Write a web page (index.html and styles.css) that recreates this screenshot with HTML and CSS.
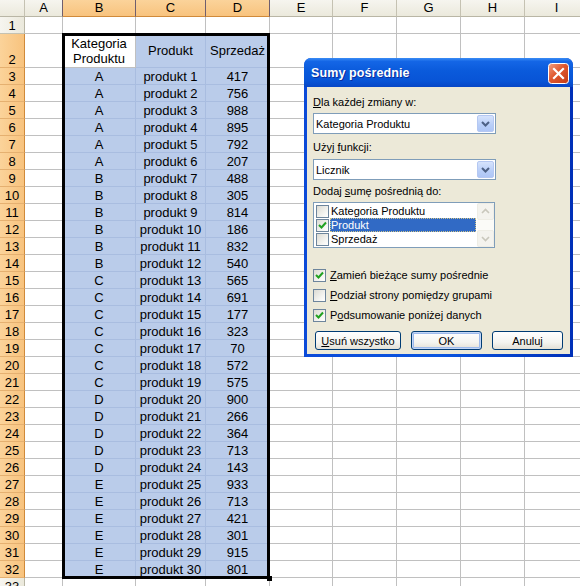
FILE: index.html
```html
<!DOCTYPE html>
<html lang="pl">
<head>
<meta charset="utf-8">
<title>Sumy pośrednie</title>
<link rel="stylesheet" href="styles.css">
</head>
<body>
<div class="sheet">
<div class="ch"></div><div class="ch">A</div><div class="ch cs">B</div><div class="ch cs">C</div><div class="ch cs">D</div><div class="ch">E</div><div class="ch">F</div><div class="ch">G</div><div class="ch">H</div><div class="ch">I</div>
<div class="rh">1</div><div class="c"></div><div class="c"></div><div class="c"></div><div class="c"></div><div class="c"></div><div class="c"></div><div class="c"></div><div class="c"></div><div class="c"></div>
<div class="rh rs">2</div><div class="c"></div><div class="c act mid">Kategoria<br>Produktu</div><div class="c s mid">Produkt</div><div class="c s mid">Sprzedaż</div><div class="c"></div><div class="c"></div><div class="c"></div><div class="c"></div><div class="c"></div>
<div class="rh rs">3</div><div class="c"></div><div class="c s">A</div><div class="c s">produkt 1</div><div class="c s">417</div><div class="c"></div><div class="c"></div><div class="c"></div><div class="c"></div><div class="c"></div>
<div class="rh rs">4</div><div class="c"></div><div class="c s">A</div><div class="c s">produkt 2</div><div class="c s">756</div><div class="c"></div><div class="c"></div><div class="c"></div><div class="c"></div><div class="c"></div>
<div class="rh rs">5</div><div class="c"></div><div class="c s">A</div><div class="c s">produkt 3</div><div class="c s">988</div><div class="c"></div><div class="c"></div><div class="c"></div><div class="c"></div><div class="c"></div>
<div class="rh rs">6</div><div class="c"></div><div class="c s">A</div><div class="c s">produkt 4</div><div class="c s">895</div><div class="c"></div><div class="c"></div><div class="c"></div><div class="c"></div><div class="c"></div>
<div class="rh rs">7</div><div class="c"></div><div class="c s">A</div><div class="c s">produkt 5</div><div class="c s">792</div><div class="c"></div><div class="c"></div><div class="c"></div><div class="c"></div><div class="c"></div>
<div class="rh rs">8</div><div class="c"></div><div class="c s">A</div><div class="c s">produkt 6</div><div class="c s">207</div><div class="c"></div><div class="c"></div><div class="c"></div><div class="c"></div><div class="c"></div>
<div class="rh rs">9</div><div class="c"></div><div class="c s">B</div><div class="c s">produkt 7</div><div class="c s">488</div><div class="c"></div><div class="c"></div><div class="c"></div><div class="c"></div><div class="c"></div>
<div class="rh rs">10</div><div class="c"></div><div class="c s">B</div><div class="c s">produkt 8</div><div class="c s">305</div><div class="c"></div><div class="c"></div><div class="c"></div><div class="c"></div><div class="c"></div>
<div class="rh rs">11</div><div class="c"></div><div class="c s">B</div><div class="c s">produkt 9</div><div class="c s">814</div><div class="c"></div><div class="c"></div><div class="c"></div><div class="c"></div><div class="c"></div>
<div class="rh rs">12</div><div class="c"></div><div class="c s">B</div><div class="c s">produkt 10</div><div class="c s">186</div><div class="c"></div><div class="c"></div><div class="c"></div><div class="c"></div><div class="c"></div>
<div class="rh rs">13</div><div class="c"></div><div class="c s">B</div><div class="c s">produkt 11</div><div class="c s">832</div><div class="c"></div><div class="c"></div><div class="c"></div><div class="c"></div><div class="c"></div>
<div class="rh rs">14</div><div class="c"></div><div class="c s">B</div><div class="c s">produkt 12</div><div class="c s">540</div><div class="c"></div><div class="c"></div><div class="c"></div><div class="c"></div><div class="c"></div>
<div class="rh rs">15</div><div class="c"></div><div class="c s">C</div><div class="c s">produkt 13</div><div class="c s">565</div><div class="c"></div><div class="c"></div><div class="c"></div><div class="c"></div><div class="c"></div>
<div class="rh rs">16</div><div class="c"></div><div class="c s">C</div><div class="c s">produkt 14</div><div class="c s">691</div><div class="c"></div><div class="c"></div><div class="c"></div><div class="c"></div><div class="c"></div>
<div class="rh rs">17</div><div class="c"></div><div class="c s">C</div><div class="c s">produkt 15</div><div class="c s">177</div><div class="c"></div><div class="c"></div><div class="c"></div><div class="c"></div><div class="c"></div>
<div class="rh rs">18</div><div class="c"></div><div class="c s">C</div><div class="c s">produkt 16</div><div class="c s">323</div><div class="c"></div><div class="c"></div><div class="c"></div><div class="c"></div><div class="c"></div>
<div class="rh rs">19</div><div class="c"></div><div class="c s">C</div><div class="c s">produkt 17</div><div class="c s">70</div><div class="c"></div><div class="c"></div><div class="c"></div><div class="c"></div><div class="c"></div>
<div class="rh rs">20</div><div class="c"></div><div class="c s">C</div><div class="c s">produkt 18</div><div class="c s">572</div><div class="c"></div><div class="c"></div><div class="c"></div><div class="c"></div><div class="c"></div>
<div class="rh rs">21</div><div class="c"></div><div class="c s">C</div><div class="c s">produkt 19</div><div class="c s">575</div><div class="c"></div><div class="c"></div><div class="c"></div><div class="c"></div><div class="c"></div>
<div class="rh rs">22</div><div class="c"></div><div class="c s">D</div><div class="c s">produkt 20</div><div class="c s">900</div><div class="c"></div><div class="c"></div><div class="c"></div><div class="c"></div><div class="c"></div>
<div class="rh rs">23</div><div class="c"></div><div class="c s">D</div><div class="c s">produkt 21</div><div class="c s">266</div><div class="c"></div><div class="c"></div><div class="c"></div><div class="c"></div><div class="c"></div>
<div class="rh rs">24</div><div class="c"></div><div class="c s">D</div><div class="c s">produkt 22</div><div class="c s">364</div><div class="c"></div><div class="c"></div><div class="c"></div><div class="c"></div><div class="c"></div>
<div class="rh rs">25</div><div class="c"></div><div class="c s">D</div><div class="c s">produkt 23</div><div class="c s">713</div><div class="c"></div><div class="c"></div><div class="c"></div><div class="c"></div><div class="c"></div>
<div class="rh rs">26</div><div class="c"></div><div class="c s">D</div><div class="c s">produkt 24</div><div class="c s">143</div><div class="c"></div><div class="c"></div><div class="c"></div><div class="c"></div><div class="c"></div>
<div class="rh rs">27</div><div class="c"></div><div class="c s">E</div><div class="c s">produkt 25</div><div class="c s">933</div><div class="c"></div><div class="c"></div><div class="c"></div><div class="c"></div><div class="c"></div>
<div class="rh rs">28</div><div class="c"></div><div class="c s">E</div><div class="c s">produkt 26</div><div class="c s">713</div><div class="c"></div><div class="c"></div><div class="c"></div><div class="c"></div><div class="c"></div>
<div class="rh rs">29</div><div class="c"></div><div class="c s">E</div><div class="c s">produkt 27</div><div class="c s">421</div><div class="c"></div><div class="c"></div><div class="c"></div><div class="c"></div><div class="c"></div>
<div class="rh rs">30</div><div class="c"></div><div class="c s">E</div><div class="c s">produkt 28</div><div class="c s">301</div><div class="c"></div><div class="c"></div><div class="c"></div><div class="c"></div><div class="c"></div>
<div class="rh rs">31</div><div class="c"></div><div class="c s">E</div><div class="c s">produkt 29</div><div class="c s">915</div><div class="c"></div><div class="c"></div><div class="c"></div><div class="c"></div><div class="c"></div>
<div class="rh rs">32</div><div class="c"></div><div class="c s">E</div><div class="c s">produkt 30</div><div class="c s">801</div><div class="c"></div><div class="c"></div><div class="c"></div><div class="c"></div><div class="c"></div>
<div class="rh">33</div><div class="c"></div><div class="c"></div><div class="c"></div><div class="c"></div><div class="c"></div><div class="c"></div><div class="c"></div><div class="c"></div><div class="c"></div>
</div>

<div class="selection"><span class="handle"></span></div>

<div class="dialog">
  <div class="titlebar">
    <span class="title">Sumy pośrednie</span>
    <span class="close">
      <svg width="21" height="21" viewBox="0 0 21 21">
        <defs>
          <linearGradient id="cg" x1="0" y1="0" x2="1" y2="1">
            <stop offset="0" stop-color="#F0A083"/>
            <stop offset="0.45" stop-color="#E0582F"/>
            <stop offset="1" stop-color="#C23A14"/>
          </linearGradient>
        </defs>
        <rect x="0.5" y="0.5" width="20" height="20" rx="3" fill="url(#cg)" stroke="#FFFFFF"/>
        <path d="M6 6 L15 15 M15 6 L6 15" stroke="#FFFFFF" stroke-width="2.2" stroke-linecap="square"/>
      </svg>
    </span>
  </div>
  <div class="body">
    <div class="label"><u>D</u>la każdej zmiany w:</div>
    <div class="combo combo1">
      <span class="combo-text">Kategoria Produktu</span>
      <span class="drop"><svg width="17" height="17" viewBox="0 0 17 17"><path d="M5 7 L8.5 10.5 L12 7" fill="none" stroke="#4D6185" stroke-width="2"/></svg></span>
    </div>
    <div class="label label2">Użyj <u>f</u>unkcji:</div>
    <div class="combo combo2">
      <span class="combo-text">Licznik</span>
      <span class="drop"><svg width="17" height="17" viewBox="0 0 17 17"><path d="M5 7 L8.5 10.5 L12 7" fill="none" stroke="#4D6185" stroke-width="2"/></svg></span>
    </div>
    <div class="label label3">Dodaj <u>s</u>umę pośrednią do:</div>
    <div class="listbox">
      <div class="items">
        <div class="item"><span class="box lbox"></span><span class="item-text">Kategoria Produktu</span></div>
        <div class="item"><span class="box lbox"><svg width="11" height="11" viewBox="0 0 11 11"><path d="M2 5 L4.5 7.5 L9 2.5" fill="none" stroke="#21A121" stroke-width="2"/></svg></span><span class="item-text selected">Produkt</span></div>
        <div class="item"><span class="box lbox"></span><span class="item-text">Sprzedaż</span></div>
      </div>
      <div class="scroll">
        <span class="sbtn"><svg width="15" height="15" viewBox="0 0 15 15"><path d="M4 9 L7.5 5.5 L11 9" fill="none" stroke="#C9C7BC" stroke-width="1.6"/></svg></span>
        <span class="track"></span>
        <span class="sbtn"><svg width="15" height="15" viewBox="0 0 15 15"><path d="M4 6 L7.5 9.5 L11 6" fill="none" stroke="#C9C7BC" stroke-width="1.6"/></svg></span>
      </div>
    </div>
    <div class="checks">
      <div class="check"><span class="box"><svg width="11" height="11" viewBox="0 0 11 11"><path d="M2 5 L4.5 7.5 L9 2.5" fill="none" stroke="#21A121" stroke-width="2"/></svg></span><span><u>Z</u>amień bieżące sumy pośrednie</span></div>
      <div class="check"><span class="box"></span><span><u>P</u>odział strony pomiędzy grupami</span></div>
      <div class="check"><span class="box"><svg width="11" height="11" viewBox="0 0 11 11"><path d="M2 5 L4.5 7.5 L9 2.5" fill="none" stroke="#21A121" stroke-width="2"/></svg></span><span>P<u>o</u>dsumowanie poniżej danych</span></div>
    </div>
    <div class="buttons">
      <span class="btn btn-wide"><u>U</u>suń wszystko</span>
      <span class="btn btn-default">OK</span>
      <span class="btn">Anuluj</span>
    </div>
  </div>
</div>
</body>
</html>
```

FILE: styles.css
```css
html, body {
  margin: 0;
  padding: 0;
}
body {
  width: 580px;
  height: 586px;
  overflow: hidden;
  position: relative;
  background: #fff;
  font-family: "Liberation Sans", Arial, sans-serif;
  color: #000;
}

/* ---------- spreadsheet ---------- */
.sheet {
  display: grid;
  grid-template-columns: 25px 38px 73px 70px 64px 63px 64px 64px 64px 64px;
  grid-template-rows: 17px 17px 34px repeat(31, 17px);
  font-size: 13px;
}
.c, .ch, .rh {
  box-sizing: border-box;
  border-right: 1px solid #C0C0C0;
  border-bottom: 1px solid #C0C0C0;
  display: flex;
  justify-content: center;
  align-items: flex-end;
  line-height: 14px;
  white-space: nowrap;
  overflow: hidden;
}
.c { background: #fff; }
.c.s {
  background: #BACCEA;
  border-color: #A9BDE0;
}
.c.act { background: #fff; }
.c.mid {
  align-items: center;
  text-align: center;
  line-height: 15px;
}
.ch {
  align-items: center;
  background: linear-gradient(#F6F5EF, #EBE9DC);
  border-right-color: #C5C2B2;
  border-bottom-color: #B9B6A5;
  color: #000;
}
.ch.cs {
  background: linear-gradient(#FBD39A, #F8C37E);
  border-right-color: #6F5E6E;
  border-bottom-color: #D08A3A;
}
.ch:nth-child(2) { border-right-color: #6F5E6E; }
.rh {
  background: linear-gradient(to right, #F6F5EF, #EBE9DC);
  border-right-color: #B9B6A5;
  border-bottom-color: #C5C2B2;
}
.rh.rs {
  background: linear-gradient(to right, #FBD39A, #F8C37E);
  border-right-color: #D08A3A;
  border-bottom-color: #E5B070;
}

.selection {
  position: absolute;
  left: 62px;
  top: 33px;
  width: 208px;
  height: 546px;
  box-sizing: border-box;
  border: 3px solid #000;
  pointer-events: none;
}
.handle {
  position: absolute;
  right: -5px;
  bottom: -5px;
  width: 5px;
  height: 5px;
  background: #000;
}

/* ---------- dialog ---------- */
.dialog {
  position: absolute;
  left: 304px;
  top: 58px;
  width: 269px;
  height: 299px;
  box-sizing: border-box;
  display: flex;
  flex-direction: column;
  background: linear-gradient(to right, #0B4AD8, #0A55E0 50%, #0030B8);
  border-radius: 7px 7px 0 0;
  overflow: hidden;
  font-size: 11px;
}
.titlebar {
  height: 29px;
  flex: none;
  display: flex;
  align-items: center;
  justify-content: space-between;
  padding: 1px 4px 0 7px;
  box-sizing: border-box;
  background: linear-gradient(#3A8CF5 0%, #1466E6 12%, #0A5ADB 45%, #0854D6 80%, #0746C6 100%);
}
.title {
  color: #fff;
  font-weight: bold;
  font-size: 12.5px;
  text-shadow: 1px 1px 0 #0A2E9E;
  letter-spacing: 0.1px;
}
.close {
  display: flex;
  width: 21px;
  height: 21px;
}
.body {
  flex: 1;
  margin: 0 3px 3px 3px;
  background: #ECE9D8;
  padding: 9px 0 0 6px;
  display: flex;
  flex-direction: column;
  align-items: flex-start;
}
.label {
  height: 13px;
  line-height: 13px;
  white-space: nowrap;
}
.label2 { margin-top: 7px; }
.label3 { margin-top: 5px; }
.combo {
  box-sizing: border-box;
  width: 183px;
  height: 21px;
  background: #fff;
  border: 1px solid #7F9DB9;
  display: flex;
  align-items: center;
  justify-content: space-between;
  padding: 0 1px 0 2px;
}
.combo1 { margin-top: 4px; }
.combo2 { margin-top: 5px; }
.drop {
  width: 17px;
  height: 17px;
  box-sizing: border-box;
  display: flex;
  border: 1px solid #B5C8F2;
  border-radius: 2px;
  background: linear-gradient(#D6E3FC, #B8CEF8 60%, #AFC6F6);
}
.drop svg { margin: -1px; }
.listbox {
  margin-top: 4px;
  width: 182px;
  height: 46px;
  box-sizing: border-box;
  border: 1px solid #7F9DB9;
  background: #fff;
  display: flex;
}
.items {
  flex: 1;
  padding: 0 1px 0 2px;
  display: flex;
  flex-direction: column;
  min-width: 0;
}
.item {
  height: 14px;
  display: flex;
  align-items: center;
  gap: 1px;
}
.item:first-child { margin-top: 1px; }
.item-text {
  flex: 1;
  height: 14px;
  line-height: 14px;
  padding-left: 1px;
  box-sizing: border-box;
  white-space: nowrap;
}
.item-text.selected {
  background: #316AC5;
  color: #fff;
  outline: 1px dotted #D0C48A;
  outline-offset: -1px;
}
.box {
  flex: none;
  width: 13px;
  height: 13px;
  box-sizing: border-box;
  border: 1px solid #6D859C;
  background: linear-gradient(135deg, #DCDBD3, #F6F6F3 70%, #FFFFFF);
  display: flex;
  align-items: center;
  justify-content: center;
}
.lbox { width: 13px; height: 13px; }
.scroll {
  width: 17px;
  flex: none;
  display: flex;
  flex-direction: column;
  background: #FBFBF8;
}
.sbtn {
  height: 17px;
  flex: none;
  box-sizing: border-box;
  border: 1px solid #EEEDE5;
  border-radius: 2px;
  background: #F4F3EE;
  display: flex;
  align-items: center;
  justify-content: center;
}
.track { flex: 1; }
.checks {
  margin-top: 21px;
  display: flex;
  flex-direction: column;
  gap: 7px;
}
.check {
  height: 13px;
  display: flex;
  align-items: center;
  gap: 4px;
  white-space: nowrap;
  line-height: 13px;
}
.buttons {
  margin-top: 9px;
  margin-left: 2px;
  display: flex;
  gap: 10px;
}
.btn {
  box-sizing: border-box;
  width: 71px;
  height: 19px;
  border: 1px solid #003C74;
  border-radius: 3px;
  background: linear-gradient(#FFFFFF, #F4F4F0 60%, #E3E0D6);
  display: flex;
  align-items: center;
  justify-content: center;
  white-space: nowrap;
}
.btn-wide { width: 86px; }
.btn-default {
  box-shadow: inset 0 0 0 1px #C3D6F6, inset 0 0 0 2px #9DBAEC;
}
```
